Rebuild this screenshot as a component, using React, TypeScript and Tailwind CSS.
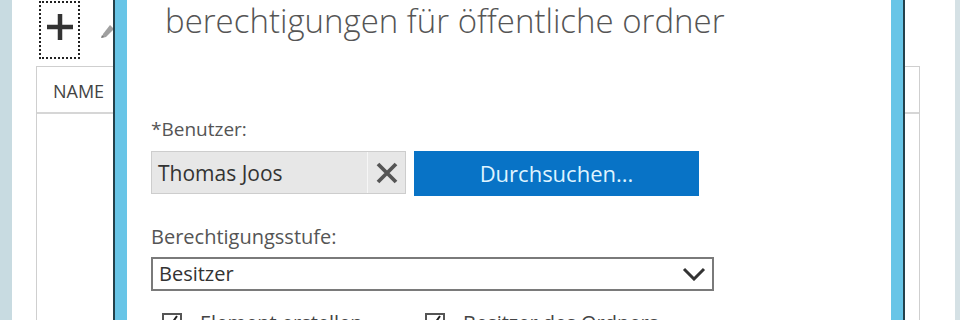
import React from 'react';

const PlusIcon = () => (
  <svg width="28" height="28" viewBox="0 0 28 28" aria-hidden="true">
    <path d="M14 1v26M1 14h26" stroke="#333" strokeWidth="4.5" />
  </svg>
);

const PencilIcon = () => (
  <svg width="16" height="16" viewBox="0 0 16 16" aria-hidden="true">
    <path d="M11 1l4 4-8 8-4 1 1-4z" fill="#a0a0a0" />
    <path d="M3 11l2 2-3 1z" fill="#777" />
  </svg>
);

const ClearIcon = () => (
  <svg width="22" height="22" viewBox="0 0 22 22" aria-hidden="true">
    <path d="M2 2l18 18M20 2L2 20" stroke="#555" strokeWidth="3.8" />
  </svg>
);

const Chevron = () => (
  <svg width="24" height="14" viewBox="0 0 24 14" aria-hidden="true">
    <path d="M2 2l10 10L22 2" stroke="#333" strokeWidth="3" fill="none" />
  </svg>
);

const Checkbox = ({ label, className }: { label: string; className?: string }) => (
  <label className={`flex items-start gap-[18px] ${className ?? ''}`}>
    <span className="flex h-[20px] w-[20px] shrink-0 items-start justify-center border-2 border-[#555] bg-white">
      <svg width="14" height="14" viewBox="0 0 14 14" aria-hidden="true">
        <path d="M2 7l3 4 7-10" stroke="#222" strokeWidth="2" fill="none" />
      </svg>
    </span>
    <span className="text-[20px] leading-[20px] text-[#444]">{label}</span>
  </label>
);

export default function App() {
  return (
    <div className="relative h-[320px] w-[960px] overflow-hidden bg-white font-['Open_Sans',sans-serif]">
      {/* page behind the dialog */}
      <div className="flex h-full">
        <div className="w-[12px] bg-[#c8dbe1]" />
        <main className="flex flex-1 flex-col">
          <div className="flex h-[66px] items-start pl-[27px]">
            <button className="mt-[1px] flex h-[58px] w-[41px] items-start justify-center border-2 border-dotted border-[#222] pt-[10px]">
              <PlusIcon />
            </button>
            <span className="ml-[19px] mt-[24px]">
              <PencilIcon />
            </span>
          </div>
          <div className="ml-[24px] mr-[35px] flex flex-1 flex-col border-x border-t border-[#cfcfcf]">
            <div className="flex h-[47px] items-center border-b-2 border-[#d6d6d6] pl-[16px] pt-[4px] text-[18px] text-[#444]">
              NAME
            </div>
            <div className="flex-1" />
          </div>
        </main>
        <div className="w-[5px] bg-[#d5e1e5]" />
      </div>

      {/* dialog */}
      <div className="absolute left-[113px] top-0 h-[340px] w-[792px] border-x-2 border-[#24414b]">
        <div className="h-full border-x-[12px] border-[#68c5e7] bg-white">
          <h1 className="whitespace-nowrap pl-[38px] pt-[1px] text-[33px] font-light leading-[40px] text-[#555]">
            berechtigungen für öffentliche ordner
          </h1>
          <div className="pl-[24px]">
            <p className="mt-[77px] text-[19px] leading-[22px] text-[#555]">*Benutzer:</p>
            <div className="mt-[11px] flex gap-[8px]">
              <div className="flex h-[43px] w-[255px] items-center border border-[#cdcdcd] bg-[#e7e7e7]">
                <span className="flex-1 whitespace-nowrap pl-[6px] pt-[3px] text-[21px] text-[#333]">Thomas Joos</span>
                <span className="flex h-full w-[38px] items-center justify-center border-l border-[#f6f6f6]">
                  <ClearIcon />
                </span>
              </div>
              <button className="h-[45px] w-[285px] bg-[#0873c6] text-[22px] text-[#dff3ff]">
                Durchsuchen...
              </button>
            </div>
            <p className="mt-[29px] text-[20px] leading-[24px] text-[#555]">Berechtigungsstufe:</p>
            <div className="mt-[8px] flex h-[34px] w-[563px] items-center justify-between border-2 border-[#7a7a7a] pl-[6px] pr-[6px]">
              <span className="text-[20px] leading-[28px] text-[#333]">Besitzer</span>
              <Chevron />
            </div>
            <div className="ml-[11px] mt-[22px] flex">
              <Checkbox label="Element erstellen" className="w-[263px]" />
              <Checkbox label="Besitzer des Ordners" />
            </div>
          </div>
        </div>
      </div>
    </div>
  );
}
